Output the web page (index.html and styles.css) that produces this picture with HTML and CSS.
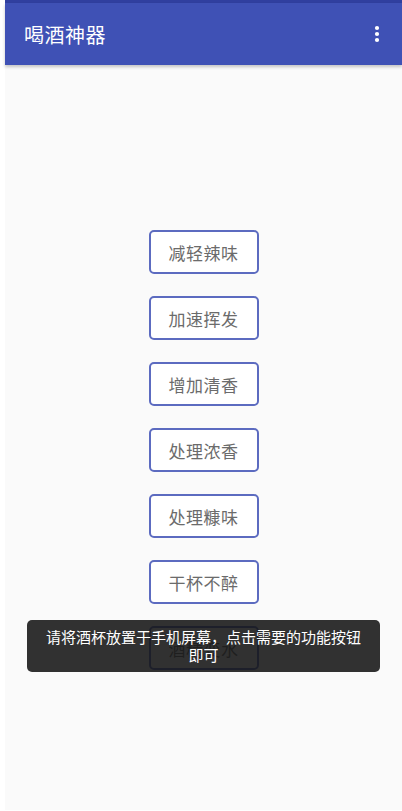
FILE: index.html
```html
<!DOCTYPE html>
<html lang="zh">
<head>
<meta charset="utf-8">
<link rel="stylesheet" href="styles.css">
</head>
<body>
<div class="phone">
  <div class="statusbar"></div>
  <header class="appbar">
    <h1 class="title">喝酒神器</h1>
    <svg class="menu" width="6" height="18" viewBox="0 0 6 18"><circle cx="3" cy="3" r="2.1" fill="#fff"/><circle cx="3" cy="9" r="2.1" fill="#fff"/><circle cx="3" cy="15" r="2.1" fill="#fff"/></svg>
  </header>
  <main class="content">
    <button class="btn">减轻辣味</button>
    <button class="btn">加速挥发</button>
    <button class="btn">增加清香</button>
    <button class="btn">处理浓香</button>
    <button class="btn">处理糠味</button>
    <button class="btn">干杯不醉</button>
    <button class="btn">酒精变水</button>
    <div class="toast">请将酒杯放置于手机屏幕，点击需要的功能按钮<br>即可</div>
  </main>
</div>
</body>
</html>
```
FILE: styles.css
```css
html, body {
  margin: 0;
  padding: 0;
  background: #ffffff;
  font-family: "Noto Sans CJK SC", "Noto Sans", sans-serif;
}
.phone {
  margin-left: 5px;
  width: 397px;
  height: 810px;
  display: flex;
  flex-direction: column;
  background: #fafafa;
  position: relative;
}
.statusbar {
  height: 3px;
  background: #303f9f;
}
.appbar {
  height: 62px;
  background: #3f51b5;
  display: flex;
  align-items: center;
  justify-content: space-between;
  padding: 0 22px 0 19px;
  box-shadow: 0 2px 3px rgba(0,0,0,0.22);
  position: relative;
  z-index: 1;
}
.title {
  margin: 0;
  color: #ffffff;
  font-size: 20px;
  font-weight: 400;
  letter-spacing: 0.5px;
}
.menu {
  display: block;
}
.content {
  flex: 1;
  display: flex;
  flex-direction: column;
  align-items: center;
  gap: 22px;
  padding-top: 165px;
  position: relative;
}
.btn {
  width: 110px;
  height: 44px;
  box-sizing: border-box;
  border: 2px solid #5c6bc0;
  border-radius: 5px;
  background: #ffffff;
  color: #6b6b6b;
  font-family: "Noto Sans CJK SC", sans-serif;
  font-size: 17px;
  padding: 0;
  letter-spacing: 0.5px;
}
.toast {
  position: absolute;
  left: 22px;
  top: 555px;
  width: 353px;
  height: 52px;
  box-sizing: border-box;
  background: rgba(20,20,20,0.88);
  border-radius: 5px;
  color: #ffffff;
  font-size: 15px;
  line-height: 18px;
  text-align: center;
  padding-top: 8px;
}
```
